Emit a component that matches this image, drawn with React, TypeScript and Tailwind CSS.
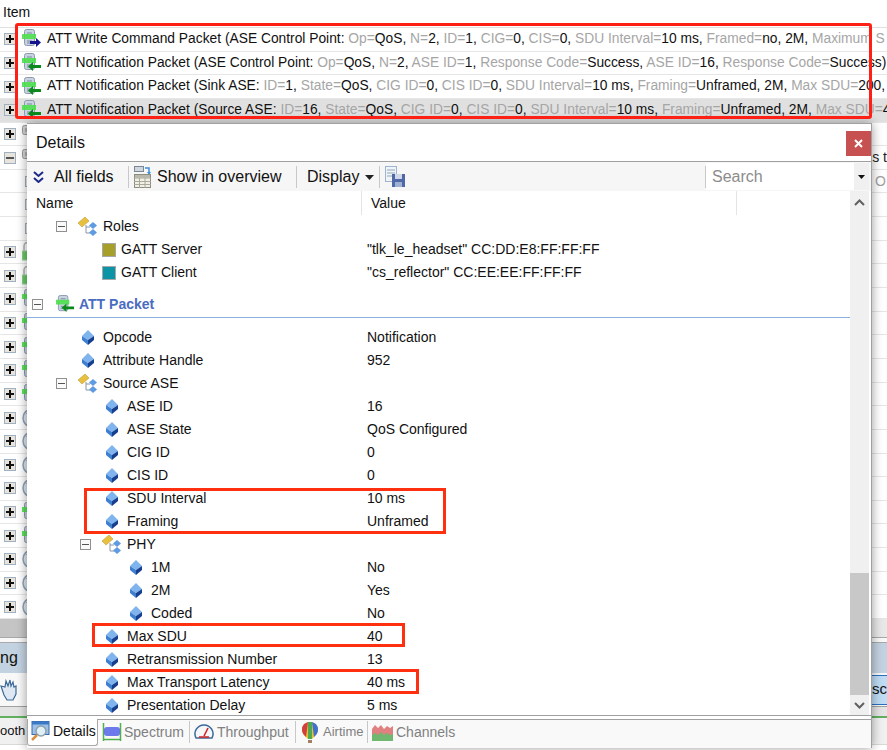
import React from "react";

type Seg = [string, string];

function Plus({ minus = false }: { minus?: boolean }) {
  return (
    <svg width="12" height="12" viewBox="0 0 12 12" className="shrink-0">
      <rect x="0.5" y="0.5" width="11" height="11" fill="#e8e4dc" stroke="#9fb0c0" />
      <rect x="2" y="5" width="8" height="2" fill={minus ? "#555" : "#111"} />
      {!minus && <rect x="5" y="2" width="2" height="8" fill="#111" />}
    </svg>
  );
}

function Minus() {
  return (
    <svg width="11" height="11" viewBox="0 0 11 11" className="shrink-0">
      <rect x="0.5" y="0.5" width="10" height="10" fill="#fafafa" stroke="#909090" />
      <rect x="2" y="5" width="7" height="1" fill="#555" />
    </svg>
  );
}

function Packet({ color = "#0a8a1a", right = false, size = 20 }: { color?: string; right?: boolean; size?: number }) {
  return (
    <svg width={size} height={size} viewBox="0 0 20 20" className="shrink-0">
      <rect x="2.5" y="0.5" width="10" height="16" rx="2" fill="#c8d2e0" stroke="#8c9ab0" />
      <path d="M5 4h5M5 12h5M5 14h5" stroke="#7b8aa0" />
      <rect x="0" y="5" width="14" height="5" fill="#4ee04e" opacity="0.9" />
      {right ? (
        <path d="M8 12h6V9l5 4.500-5 4.500v-3H8z" fill={color} />
      ) : (
        <path d="M19 12h-8V9l-5 4.500 5 4.500v-3h8z" fill={color} />
      )}
    </svg>
  );
}

function Lock() {
  return (
    <svg width="14" height="20" viewBox="0 0 14 20" className="shrink-0">
      <path d="M2 9V4a3.500 3.500 0 0 1 7 0" fill="none" stroke="#b0b0b0" strokeWidth="1.500" />
      <rect x="0" y="9" width="13" height="9" fill="#68c868" stroke="#9bd09b" />
    </svg>
  );
}

function Clock() {
  return (
    <svg width="20" height="20" viewBox="0 0 20 20" className="shrink-0">
      <circle cx="10" cy="10" r="9" fill="#dde6ef" stroke="#8fa3b8" strokeWidth="1.500" />
      <path d="M10 10L5 5" stroke="#333" strokeWidth="1.500" />
    </svg>
  );
}

function GrayPacket() {
  return (
    <svg width="12" height="18" viewBox="0 0 12 18" className="shrink-0">
      <rect x="0.500" y="0.500" width="10" height="9" rx="2" fill="#d5d5d5" stroke="#999" />
      <path d="M3 4h5M3 6h5" stroke="#888" />
      <path d="M6 11v4" stroke="#6a6" />
    </svg>
  );
}

function Diamond() {
  return (
    <svg width="12" height="15" viewBox="0 0 12 15" className="shrink-0">
      <polygon points="6,0 12,6 6,10 0,6" fill="#7fb4ee" />
      <polygon points="0,6 6,10 6,15 0,10" fill="#3f7fd0" />
      <polygon points="12,6 6,10 6,15 12,10" fill="#16408f" />
    </svg>
  );
}

function TreeIcon() {
  return (
    <svg width="20" height="20" viewBox="0 0 20 20" className="shrink-0">
      <polygon points="0,6 7,0 11,4 4,10" fill="#e8c040" stroke="#b89020" strokeWidth="0.500" />
      <path d="M8 8v8h4M8 10h4" stroke="#8a96a8" fill="none" />
      <polygon points="15,5 19,8.500 15,12 11,8.500" fill="#5f9be0" />
      <polygon points="15,12 19,15.500 15,19 11,15.500" fill="#5f9be0" />
    </svg>
  );
}

function Swatch({ c }: { c: string }) {
  return <span className="w-[14px] h-[14px] border border-[#a8a8a8] shrink-0" style={{ backgroundColor: c }} />;
}

function Overview() {
  return (
    <svg width="18" height="22" viewBox="0 0 18 22" className="shrink-0">
      <rect x="0.500" y="0.500" width="9" height="5" fill="#cfd6de" stroke="#7a8694" />
      <path d="M11 2h4v5" fill="none" stroke="#3b8fe0" strokeWidth="1.500" />
      <path d="M13 6l2 3 2-3z" fill="#3b8fe0" />
      <rect x="0.500" y="8.500" width="16" height="13" fill="#f2efe4" stroke="#8c8c80" />
      <path d="M0 12h17M0 15.500h17M0 18.500h17M5.500 9v13M11 9v13" stroke="#a8a89c" />
      <rect x="1" y="9" width="15" height="3" fill="#b8b8ac" />
    </svg>
  );
}

function SaveIcon() {
  return (
    <svg width="21" height="22" viewBox="0 0 21 22" className="shrink-0">
      <rect x="0.500" y="0.500" width="11" height="15" fill="#f0f4f8" stroke="#9fb4cc" />
      <path d="M2 4h8M2 7h8M2 10h8" stroke="#90a8c0" />
      <rect x="7" y="8" width="13" height="13" fill="#5068a8" />
      <rect x="10" y="8" width="7" height="5" fill="#d0d8e8" />
      <rect x="10" y="16" width="7" height="5" fill="#a0b0d0" />
    </svg>
  );
}

function Magnifier() {
  return (
    <svg width="19" height="21" viewBox="0 0 19 21" className="shrink-0">
      <rect x="1" y="0.500" width="17" height="13" fill="#9cc0e8" stroke="#3a6aa8" />
      <rect x="1" y="0.500" width="17" height="3" fill="#3a78c8" />
      <circle cx="10" cy="10" r="5" fill="#dff0f8" stroke="#90a0a8" strokeWidth="1.500" />
      <path d="M6 14l-5 5" stroke="#d89040" strokeWidth="2.500" />
    </svg>
  );
}

function SpectrumIcon() {
  return (
    <svg width="20" height="20" viewBox="0 0 20 20" className="shrink-0">
      <path d="M1.500 1v18M18.500 1v18M2 17.500h16" stroke="#50b050" strokeWidth="1.500" fill="none" />
      <rect x="2" y="5" width="16" height="9" rx="3" fill="#4a5ae8" opacity="0.8" />
    </svg>
  );
}

function GaugeIcon() {
  return (
    <svg width="20" height="20" viewBox="0 0 20 20" className="shrink-0">
      <path d="M2 16a9 9 0 1 1 16 0z" fill="#f4f6f8" stroke="#3a6898" strokeWidth="1.500" />
      <path d="M10 14l4-8" stroke="#d02020" strokeWidth="1.500" />
      <path d="M5 15h10" stroke="#d02020" strokeWidth="1.500" />
    </svg>
  );
}

function Balloon() {
  return (
    <svg width="20" height="21" viewBox="0 0 20 21" className="shrink-0">
      <path d="M10 0a8 8 0 0 0-8 8c0 4 4 7 6 9h4c2-2 6-5 6-9a8 8 0 0 0-8-8z" fill="#e8c030" />
      <path d="M4 2a8 8 0 0 0-2 6c0 3 2 5 4 7l2-15z" fill="#d04040" />
      <path d="M16 2a8 8 0 0 1 2 6c0 3-2 5-4 7l-2-15z" fill="#4070d0" />
      <path d="M8 0h4v17H8z" fill="#50a850" />
      <rect x="8" y="18" width="4" height="3" fill="#a08060" />
    </svg>
  );
}

function ChannelsIcon() {
  return (
    <svg width="21" height="18" viewBox="0 0 21 18" className="shrink-0">
      <path d="M0 6l3-4 3 3 3-3 3 4 3-3 3 2 3-2v16H0z" fill="#e08080" />
      <path d="M0 12l3-2 3 2 3-3 3 3 3-2 3 2 3-1v7H0z" fill="#70b870" />
    </svg>
  );
}

function Hand() {
  return (
    <svg width="17" height="24" viewBox="0 0 17 24" className="shrink-0">
      <path d="M1 8l3 9 3 5h6l3-6V8l-2 1-1-5-2 4-1-6-2 6-2-5-1 6z" fill="#dfe8f2" stroke="#3a6a9a" strokeWidth="1.200" />
    </svg>
  );
}

function Chevrons() {
  return (
    <svg width="11" height="12" viewBox="0 0 11 12" className="shrink-0">
      <path d="M1 1l4.500 4L10 1M1 7l4.500 4L10 7" fill="none" stroke="#1c2a8a" strokeWidth="2" />
    </svg>
  );
}

function Up({ flip = false }: { flip?: boolean }) {
  return (
    <svg width="11" height="7" viewBox="0 0 11 7" className={flip ? "rotate-180" : ""}>
      <path d="M1 6l4.500-4.500L10 6" fill="none" stroke="#606060" strokeWidth="2" />
    </svg>
  );
}

function Packed({ parts }: { parts: Seg[] }) {
  return (
    <>
      {parts.map(([g, b], i) => (
        <React.Fragment key={i}>
          <span className="text-[#a6a6a6]">{g}</span>
          <span>{b}</span>
        </React.Fragment>
      ))}
    </>
  );
}

const topRows: { right?: boolean; active?: boolean; head: string; parts: Seg[] }[] = [
  {
    right: true,
    head: "ATT Write Command Packet (ASE Control Point: ",
    parts: [["Op=", "QoS, "], ["N=", "2, "], ["ID=", "1, "], ["CIG=", "0, "], ["CIS=", "0, "], ["SDU Interval=", "10 ms, "], ["Framed=", "no, 2M, "], ["Maximum S", ""]],
  },
  {
    head: "ATT Notification Packet (ASE Control Point: ",
    parts: [["Op=", "QoS, "], ["N=", "2, "], ["ASE ID=", "1, "], ["Response Code=", "Success, "], ["ASE ID=", "16, "], ["Response Code=", "Success)"]],
  },
  {
    head: "ATT Notification Packet (Sink ASE: ",
    parts: [["ID=", "1, "], ["State=", "QoS, "], ["CIG ID=", "0, "], ["CIS ID=", "0, "], ["SDU Interval=", "10 ms, "], ["Framing=", "Unframed, 2M, "], ["Max SDU=", "200, "]],
  },
  {
    active: true,
    head: "ATT Notification Packet (Source ASE: ",
    parts: [["ID=", "16, "], ["State=", "QoS, "], ["CIG ID=", "0, "], ["CIS ID=", "0, "], ["SDU Interval=", "10 ms, "], ["Framing=", "Unframed, 2M, "], ["Max SDU=", "4"]],
  },
];

type Kind = "gray" | "grayMinus" | "sub" | "lock" | "packet" | "clock";
const bgRows: Kind[] = ["gray", "grayMinus", "sub", "sub", "sub", "lock", "lock", "packet", "packet", "packet", "packet", "packet", "clock", "clock", "clock", "clock", "packet", "packet", "clock", "clock", "clock"];

function BgRow({ kind, idx }: { kind: Kind; idx: number }) {
  return (
    <div className="h-[23.65px] shrink-0 border-b border-[#e6e6e6] flex items-center overflow-hidden">
      {kind === "sub" ? (
        <div className="ml-[25px] w-[8px] h-[11px] border border-[#9fb0c0] bg-[#eee]" />
      ) : (
        <div className="ml-[4px] flex items-center gap-[6px]">
          {kind === "grayMinus" ? <Plus minus /> : <Plus />}
          {(kind === "gray" || kind === "grayMinus") && <GrayPacket />}
          {kind === "lock" && <Lock />}
          {kind === "packet" && <Packet />}
          {kind === "clock" && <Clock />}
        </div>
      )}
      <div className="ml-auto text-[14px] whitespace-nowrap">
        {idx === 1 && <span className="text-[#222]">us t</span>}
        {idx === 2 && <span className="text-[#a0a0a0] pr-[1px]">O</span>}
      </div>
    </div>
  );
}

function Row({ indent, icon, name, value, gap = 9, children }: { indent: number; icon?: React.ReactNode; name: string; value?: string; gap?: number; children?: React.ReactNode }) {
  return (
    <div className="h-[23px] flex items-center shrink-0">
      <div className="w-[340px] shrink-0 flex items-center" style={{ paddingLeft: indent }}>
        {children}
        {icon}
        <span style={{ marginLeft: gap }}>{name}</span>
      </div>
      {value && <span>{value}</span>}
    </div>
  );
}

function Sep() {
  return <div className="w-px h-[22px] bg-[#c8c8c8] shrink-0" />;
}

export default function App() {
  return (
    <div className="relative w-[887px] h-[750px] overflow-hidden bg-white text-[14px] text-[#111]" style={{ fontFamily: '"Liberation Sans", Tahoma, sans-serif' }}>
      <div className="h-[28px] border-b border-[#e0e0e0] pl-[3px] pb-[3px] flex items-center">Item</div>

      {topRows.map((r, i) => (
        <div key={i} className={`h-[23.65px] border-b border-[#e6e6e6] flex items-center whitespace-nowrap overflow-hidden text-[13.8px] ${r.active ? "bg-[#e0e0e0]" : ""}`}>
          <div className="ml-[4px] w-[18px] shrink-0"><Plus /></div>
          <Packet right={r.right} color={r.right ? "#14148c" : "#0a8a1a"} />
          <span className="ml-[5px] whitespace-pre">
            {r.head}
            <Packed parts={r.parts} />
          </span>
        </div>
      ))}

      {bgRows.map((k, i) => (
        <BgRow key={i} kind={k} idx={i} />
      ))}

      <div className="h-[19px] bg-gradient-to-r from-[#c4c4c4] to-[#e8e8e8] border-b border-[#a8a8a8]" />
      <div className="h-[5px] bg-[#f8f8f8] border-b border-[#a8a8a8]" />
      <div className="h-[30px] bg-[#c3d2e0] flex items-center justify-between text-[16px]">
        <span>ng</span>
      </div>
      <div className="h-[34px] flex items-center justify-between border-b border-[#a0a0a0] bg-[#f8f8f8]">
        <Hand />
        <div className="w-[15px] h-[30px] bg-[#bedcf4] border-y border-[#2a70c0] text-[15px] flex items-center overflow-hidden">sc</div>
      </div>
      <div className="h-[11px] bg-[#e4e4e4] border-b-2 border-[#60b060]" />
      <div className="h-[27px] bg-[#f0f0f0] text-[13px] flex items-center overflow-hidden border-b border-[#d8d8d8]">
        <span className="whitespace-nowrap">ooth</span>
      </div>

      <div className="absolute left-[27px] top-[123px] w-[845px] h-[625px] bg-white border-t border-r border-[#a0a0a0] flex flex-col shadow-[0_0_10px_rgba(0,0,0,0.4)]">
        <div className="h-[38px] shrink-0 flex items-center border-b border-[#a0a0a0] pl-[9px] text-[16px]">
          <span>Details</span>
          <div className="ml-auto mt-[1px] w-[25px] h-[25px] bg-[#c75050] text-white flex items-center justify-center">
            <svg width="9" height="9" viewBox="0 0 9 9"><path d="M1 1l7 7M8 1l-7 7" stroke="#fff" strokeWidth="2" /></svg>
          </div>
        </div>

        <div className="h-[29px] shrink-0 flex items-center bg-[#f6f6f6] text-[16px] whitespace-nowrap">
          <div className="ml-[6px]"><Chevrons /></div>
          <span className="ml-[10px] w-[63px]">All fields</span>
          <div className="ml-[11px]"><Sep /></div>
          <div className="ml-[5px]"><Overview /></div>
          <span className="ml-[5px] w-[128px]">Show in overview</span>
          <div className="ml-[11px]"><Sep /></div>
          <span className="ml-[10px] w-[51px]">Display</span>
          <svg width="9" height="5" viewBox="0 0 9 5" className="ml-[7px] mt-[2px]"><path d="M0 0h9L4.500 5z" fill="#222" /></svg>
          <div className="ml-[5px]"><Sep /></div>
          <div className="ml-[5px]"><SaveIcon /></div>
          <div className="ml-[299px]"><Sep /></div>
          <div className="w-[148px] h-[27px] bg-white pl-[6px] flex items-center text-[#8c8c8c]">Search</div>
          <div className="w-[15px] h-[27px] bg-[#f0f0f0] flex items-center justify-center">
            <svg width="7" height="4" viewBox="0 0 7 4"><path d="M0 0h7L3.500 4z" fill="#111" /></svg>
          </div>
        </div>

        <div className="flex-1 flex min-h-0">
          <div className="flex-1 min-w-0 flex flex-col">
            <div className="h-[24px] shrink-0 flex items-center">
              <span className="ml-[9px] w-[325px]">Name</span>
              <div className="w-px h-full bg-[#e4e4e4]" />
              <span className="ml-[9px] w-[365px]">Value</span>
              <div className="w-px h-full bg-[#e4e4e4]" />
            </div>

            <Row indent={29} gap={5} name="Roles" icon={<div className="ml-[11px]"><TreeIcon /></div>}><Minus /></Row>
            <Row indent={75} gap={5} name="GATT Server" value={'"tlk_le_headset" CC:DD:E8:FF:FF:FF'} icon={<Swatch c="#a6a02a" />} />
            <Row indent={75} gap={5} name="GATT Client" value={'"cs_reflector" CC:EE:EE:FF:FF:FF'} icon={<Swatch c="#0a94a6" />} />

            <div className="mt-[8px] h-[26px] shrink-0 border-b border-[#8ab0e0] flex items-center pl-[5px]">
              <Minus />
              <div className="ml-[13px]"><Packet size={19} /></div>
              <span className="ml-[4px] font-bold text-[#4a6cc0]">ATT Packet</span>
            </div>
            <div className="h-[8px] shrink-0" />

            <Row indent={55} name="Opcode" value="Notification" icon={<Diamond />} />
            <Row indent={55} name="Attribute Handle" value="952" icon={<Diamond />} />
            <Row indent={29} gap={5} name="Source ASE" icon={<div className="ml-[11px]"><TreeIcon /></div>}><Minus /></Row>
            <Row indent={79} name="ASE ID" value="16" icon={<Diamond />} />
            <Row indent={79} name="ASE State" value="QoS Configured" icon={<Diamond />} />
            <Row indent={79} name="CIG ID" value="0" icon={<Diamond />} />
            <Row indent={79} name="CIS ID" value="0" icon={<Diamond />} />
            <Row indent={79} name="SDU Interval" value="10 ms" icon={<Diamond />} />
            <Row indent={79} name="Framing" value="Unframed" icon={<Diamond />} />
            <Row indent={53} gap={5} name="PHY" icon={<div className="ml-[11px]"><TreeIcon /></div>}><Minus /></Row>
            <Row indent={103} name="1M" value="No" icon={<Diamond />} />
            <Row indent={103} name="2M" value="Yes" icon={<Diamond />} />
            <Row indent={103} name="Coded" value="No" icon={<Diamond />} />
            <Row indent={79} name="Max SDU" value="40" icon={<Diamond />} />
            <Row indent={79} name="Retransmission Number" value="13" icon={<Diamond />} />
            <Row indent={79} name="Max Transport Latency" value="40 ms" icon={<Diamond />} />
            <Row indent={79} name="Presentation Delay" value="5 ms" icon={<Diamond />} />
          </div>

          <div className="w-[19px] mr-[2px] shrink-0 bg-[#f0f0f0] flex flex-col">
            <div className="h-[22px] flex items-center justify-center"><Up /></div>
            <div className="h-[360px]" />
            <div className="h-[122px] bg-[#c8c8c8]" />
            <div className="flex-1 flex items-center justify-center"><Up flip /></div>
          </div>
        </div>

        <div className="h-[3px] shrink-0 border-y border-[#a0a0a0] box-content" />
        <div className="h-[28px] shrink-0 bg-[#f9f9f9] flex items-start whitespace-nowrap text-[#808080]">
          <div className="-mt-[1px] h-[27px] w-[71px] bg-white border-x border-b border-[#a8a8a8] rounded-b-[3px] flex items-center pl-[3px] pb-[2px] text-[#111]">
            <Magnifier />
            <span className="ml-[3px]">Details</span>
          </div>
          <div className="h-[24px] flex items-center">
            <div className="ml-[4px]"><SpectrumIcon /></div>
            <span className="ml-[2px] w-[61px]">Spectrum</span>
            <div className="ml-[4px]"><Sep /></div>
            <div className="ml-[4px]"><GaugeIcon /></div>
            <span className="ml-[3px] w-[74px]">Throughput</span>
            <div className="ml-[4px]"><Sep /></div>
            <div className="ml-[4px]"><Balloon /></div>
            <span className="ml-[3px] w-[41px] text-[13px]">Airtime</span>
            <div className="ml-[3px]"><Sep /></div>
            <div className="ml-[4px]"><ChannelsIcon /></div>
            <span className="ml-[3px]">Channels</span>
          </div>
        </div>
      </div>

      <div className="absolute left-[15px] top-[23px] w-[857px] h-[96px] border-[3px] border-[#ff2015] rounded-[3px]" />
      <div className="absolute left-[84px] top-[488px] w-[362px] h-[46px] border-[3px] border-[#ff3010]" />
      <div className="absolute left-[92px] top-[623px] w-[313px] h-[24px] border-[3px] border-[#ff3010]" />
      <div className="absolute left-[93px] top-[669px] w-[326px] h-[25px] border-[3px] border-[#ff3010]" />
    </div>
  );
}
